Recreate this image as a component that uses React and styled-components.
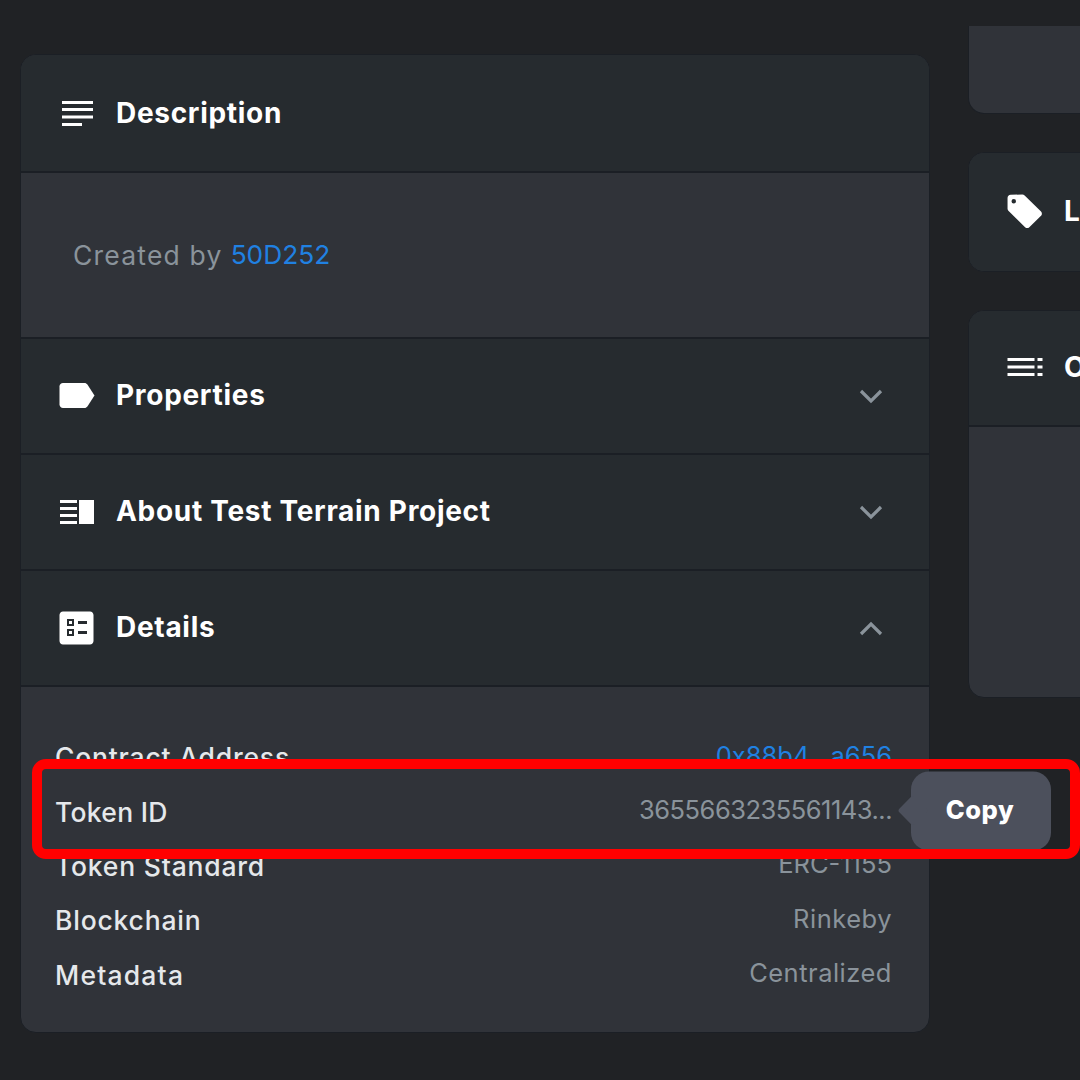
import React from "react";
import styled, { createGlobalStyle } from "styled-components";

const Global = createGlobalStyle`
  html, body { margin: 0; padding: 0; background: #202225; }
  * { box-sizing: border-box; }
`;

const Page = styled.div`
  position: relative;
  width: 1080px;
  height: 1080px;
  overflow: hidden;
  background: #202225;
  font-family: Inter, "Liberation Sans", sans-serif;
  display: flex;
  gap: 38px;
  padding-left: 20px;
  align-items: flex-start;
`;

const LeftColumn = styled.div`
  flex: 0 0 910px;
  padding-top: 54px;
`;

const RightColumn = styled.div`
  flex: 0 0 600px;
  padding-top: 26px;
  display: flex;
  flex-direction: column;
  gap: 38px;
`;

const Card = styled.section`
  border: 1px solid #1b1f25;
  border-top-width: ${p => (p.$flatTop ? "0" : "1px")};
  border-radius: ${p => (p.$flatTop ? "0 0 16px 16px" : "16px")};
  background: #303339;
  & > :first-child { border-top-left-radius: 15px; border-top-right-radius: 15px; }
  & > :last-child { border-bottom-left-radius: 15px; border-bottom-right-radius: 15px; }
`;

const Header = styled.div`
  height: ${p => p.$h}px;
  display: flex;
  align-items: center;
  background: #262b2f;
  padding: 0 46px ${p => p.$pb ?? 2}px 38px;
  border-top: ${p => (p.$divided ? "2px solid #1b1f25" : "0")};
  border-bottom: ${p => (p.$closed ? "0" : "2px solid #1b1f25")};
`;

const IconSlot = styled.span`
  flex: 0 0 36px;
  width: 36px;
  height: 36px;
  margin-right: 21px;
  margin-top: ${p => p.$mt ?? 0}px;
  display: flex;
  align-items: center;
  justify-content: center;
  color: #fff;
`;

const Title = styled.h3`
  margin: 0;
  flex: 1;
  font-size: 28px;
  font-weight: 700;
  letter-spacing: 0.7px;
  color: #fff;
  white-space: nowrap;
`;

const DescriptionBody = styled.div`
  height: 164px;
  display: flex;
  align-items: center;
  padding: 0 0 1px 52px;
  font-size: 26.5px;
  letter-spacing: 1.2px;
  color: #8a939b;
`;

const Link = styled.a`
  color: #2081e2;
  font-size: ${p => p.$size ?? 25.5}px;
  letter-spacing: 0;
  margin-left: ${p => p.$ml || 0}px;
`;

const DetailsBody = styled.div`
  padding: 43px 37px 30px 34px;
`;

const Row = styled.div`
  position: relative;
  height: 54.4px;
  display: flex;
  align-items: center;
  justify-content: space-between;
  font-size: 26.5px;
`;

const Label = styled.span`
  color: #e5e8eb;
  font-weight: 500;
  letter-spacing: ${p => p.$ls ?? 0.8}px;
`;

const Value = styled.span`
  color: #8a939b;
  position: relative;
  top: -2px;
  font-size: 25.5px;
  letter-spacing: ${p => p.$ls ?? 0.5}px;
`;

const Tooltip = styled.div`
  position: absolute;
  left: calc(100% + 19px);
  top: calc(50% - 1px);
  transform: translateY(-50%);
  width: 140px;
  height: 79px;
  display: flex;
  align-items: center;
  justify-content: center;
  border-radius: 18px;
  background: #4c505c;
  color: #fff;
  font-size: 25.5px;
  font-weight: 800;
  padding-right: 2px;
  &::before {
    content: "";
    position: absolute;
    left: -9px;
    top: 50%;
    width: 22px;
    height: 22px;
    transform: translateY(-50%) rotate(45deg);
    border-radius: 3px;
    background: #4c505c;
  }
  & > span { position: relative; top: -2px; letter-spacing: 0.5px; }
`;

const Chevron = styled.svg`
  flex: none;
  width: 24px;
  height: 15px;
  margin-top: 2px;
  fill: none;
  stroke: #8a939b;
  stroke-width: 3.2;
`;

const TopStub = styled.div`
  height: 87px;
`;

const OffersBody = styled.div`
  height: 270px;
`;

const Highlight = styled.div`
  position: absolute;
  left: 32px;
  top: 759px;
  width: 1048px;
  height: 100px;
  border: 10px solid #ff0000;
  border-radius: 14px;
  pointer-events: none;
`;

const Up = () => (
  <Chevron viewBox="0 0 24 15"><polyline points="2,13 12,3 22,13" /></Chevron>
);
const Down = () => (
  <Chevron viewBox="0 0 24 15"><polyline points="2,2 12,12 22,2" /></Chevron>
);

const NotesIcon = () => (
  <svg width="31" height="25" viewBox="0 0 31 25" fill="#fff">
    <rect x="0" y="0" width="31" height="3" />
    <rect x="0" y="7" width="31" height="3" />
    <rect x="0" y="14.5" width="31" height="3" />
    <rect x="0" y="22" width="20" height="3" />
  </svg>
);
const LabelIcon = () => (
  <svg width="36" height="27" viewBox="0 0 36 27" fill="#fff">
    <path d="M4 1h21.5c1.2 0 2.2.6 2.9 1.5L35.500 13.500 28.400 24.500c-.7.9-1.700 1.500-2.900 1.500H4c-1.900 0-3.500-1.500-3.500-3.400V4.400C.5 2.500 2.100 1 4 1z" />
  </svg>
);
const SplitIcon = () => (
  <svg width="36" height="26" viewBox="0 0 36 26" fill="#fff">
    <rect x="1" y="1" width="17" height="3" />
    <rect x="1" y="8" width="17" height="3" />
    <rect x="1" y="15" width="17" height="3" />
    <rect x="1" y="22" width="17" height="3" />
    <rect x="20" y="1" width="15" height="24" />
  </svg>
);
const ListIcon = () => (
  <svg width="36" height="34" viewBox="0 0 36 34">
    <path
      fill="#fff"
      fillRule="evenodd"
      d="M4 0.500h27c1.900 0 3.500 1.600 3.500 3.500v26c0 1.900-1.600 3.500-3.500 3.500H4c-1.900 0-3.500-1.600-3.500-3.500V4C.5 2.100 2.100.5 4 .5zM8 8v7h7V8H8zm2 2h3v3h-3v-3zM8 18v7h7v-7H8zm2 2h3v3h-3v-3zM19 10v3h9v-3h-9zM19 20v3h9v-3h-9z"
    />
  </svg>
);
const TagIcon = () => (
  <svg width="41" height="39" viewBox="0 0 40 38">
    <path
      fill="#fff"
      fillRule="evenodd"
      d="M4 0.500l13-.4c1 0 1.900.4 2.600 1.100l18.200 17.900c1.300 1.300 1.300 3.400 0 4.700L24.800 36.400c-1.300 1.300-3.400 1.300-4.700 0L1.800 18.500C1.100 17.800.6 16.900.6 15.900L.6 4C.6 2 2 .6 4 .5zM7.500 5a2.500 2.500 0 1 0 0 5 2.500 2.500 0 0 0 0-5z"
    />
  </svg>
);
const TocIcon = () => (
  <svg width="36" height="20" viewBox="0 0 36 20" fill="#fff">
    <rect x="0.500" y="1" width="27" height="3" />
    <rect x="0.500" y="8.500" width="27" height="3" />
    <rect x="0.500" y="16" width="27" height="3" />
    <rect x="30.500" y="1" width="5" height="3" />
    <rect x="30.500" y="8.500" width="5" height="3" />
    <rect x="30.500" y="16" width="5" height="3" />
  </svg>
);

export default function App() {
  return (
    <Page>
      <Global />
      <LeftColumn>
        <Card>
          <Header $h={118} $pb={0}>
            <IconSlot><NotesIcon /></IconSlot>
            <Title>Description</Title>
          </Header>
          <DescriptionBody>
            Created by<Link $ml={8} $size={26.3}>50D252</Link>
          </DescriptionBody>
          <Header $h={118} $divided>
            <IconSlot $mt={1}><LabelIcon /></IconSlot>
            <Title>Properties</Title>
            <Down />
          </Header>
          <Header $h={116}>
            <IconSlot $mt={1}><SplitIcon /></IconSlot>
            <Title>About Test Terrain Project</Title>
            <Down />
          </Header>
          <Header $h={116}>
            <IconSlot $mt={2}><ListIcon /></IconSlot>
            <Title>Details</Title>
            <Up />
          </Header>
          <DetailsBody>
            <Row><Label>Contract Address</Label><Value $ls={0}><Link>0x88b4...a656</Link></Value></Row>
            <Row>
              <Label $ls={0.3}>Token ID</Label>
              <Value $ls={-0.5}>3655663235561143...</Value>
              <Tooltip><span>Copy</span></Tooltip>
            </Row>
            <Row><Label>Token Standard</Label><Value $ls={0}>ERC-1155</Value></Row>
            <Row><Label>Blockchain</Label><Value>Rinkeby</Value></Row>
            <Row><Label $ls={1.2}>Metadata</Label><Value>Centralized</Value></Row>
          </DetailsBody>
        </Card>
      </LeftColumn>
      <RightColumn>
        <Card $flatTop><TopStub /></Card>
        <Card>
          <Header $h={118} $closed>
            <IconSlot><TagIcon /></IconSlot>
            <Title>Listings</Title>
          </Header>
        </Card>
        <Card>
          <Header $h={116}>
            <IconSlot><TocIcon /></IconSlot>
            <Title>Offers</Title>
          </Header>
          <OffersBody />
        </Card>
      </RightColumn>
      <Highlight />
    </Page>
  );
}
